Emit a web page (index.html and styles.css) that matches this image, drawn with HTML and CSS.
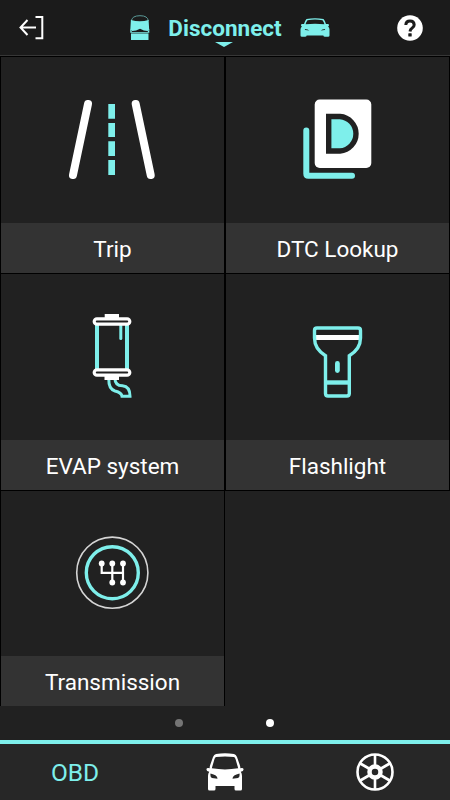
FILE: index.html
```html
<!DOCTYPE html>
<html lang="en">
<head>
    <meta charset="UTF-8">
    <title>OBD</title>
    <link rel="stylesheet" href="styles.css">
</head>
<body>
    <div class="header">
        <svg class="exit" width="26" height="26" viewBox="0 0 26 26">
            <path d="M18 11.5H3M9.5 4L2.5 11.5L9.5 19M17.5 1H24.3V22.3H17.5"/>
        </svg>
        <div class="status">
            <svg width="20" height="26" viewBox="0 0 20 26">
                <path class="thin" d="M1.3 6Q2 .7 10 .7T18.3 6"/>
                <path d="M.9 5Q10 7.5 18.6 5L19.2 15L17.5 16Q14 16 10 13.8Q6 16 2.3 16L.3 15Z"/>
                <path d="M.3 14L2 17H17.5L19.3 14V17.8H.3Z"/>
                <path d="M1 18.4H18.5V25H1Z"/>
            </svg>
            <h1>Disconnect</h1>
            <svg width="30" height="20" viewBox="0 0 30 20">
                <path fill-rule="evenodd" d="M6.5 1Q15-.6 23.5 1Q25.3 3 26 6L28.6 6L29 8L28 8.5Q29.5 9.7 29.5 11.5V17.5Q29.5 18.8 28 18.8H25Q23.5 18.8 23.3 17.6H6.7Q6.5 18.8 5 18.8H2Q.5 18.8 .5 17.5V11.5Q.5 9.7 2 8.5L1 8L1.4 6L4 6Q4.7 3 6.5 1ZM7.5 2.2Q6 4 5.6 6.3Q15 5.4 24.4 6.3Q24 4 22.5 2.2Q15 1 7.5 2.2ZM4.8 10.9L5.2 12L9.3 12.5Q8 11.2 4.8 10.9ZM25.2 10.9L24.8 12L20.7 12.5Q22 11.2 25.2 10.9Z"/>
            </svg>
            <i class="arrow"></i>
        </div>
        <svg class="help" width="26" height="26" viewBox="0 0 26 26">
            <circle cx="13" cy="13" r="12.8"/>
            <path d="M8.8 10Q9 6 13 6T17.2 9.8Q17.2 11.8 15.2 13T13 16.5"/>
            <rect x="11.3" y="18.3" width="3.4" height="3.2" rx=".5"/>
        </svg>
    </div>

    <div class="grid">
        <div class="cell">
            <div class="icon">
                <svg width="111" height="110" viewBox="0 0 111 110">
                    <path class="white road" d="M31 19L16 90M78.7 19L93.7 90"/>
                    <path class="fill" d="M51.3 19h6.7v14.7h-6.7zM51.3 38h6.7v14h-6.7zM51.3 56.3h6.7V71h-6.7zM51.3 75h6.7v15h-6.7z"/>
                </svg>
            </div>
            <p>Trip</p>
        </div>
        <div class="cell">
            <div class="icon">
                <svg width="111" height="110" viewBox="0 0 111 110">
                    <path class="cyan page" d="M24.3 45.5V88.8Q24.3 90.8 26.3 90.8H70"/>
                    <rect class="solid" x="32.7" y="14.5" width="56.6" height="68.5" rx="5"/>
                    <path class="letter" d="M46.7 31.5H58A17.3 17.3 0 0 1 58 66H46.7Z"/>
                </svg>
            </div>
            <p>DTC Lookup</p>
        </div>
        <div class="cell">
            <div class="icon">
                <svg width="111" height="110" viewBox="0 0 111 110">
                    <path class="cyan tube" d="M40 22V68M70 22V68"/>
                    <path class="cyan" d="M63.8 22V36.5"/>
                    <path class="cyan" d="M51.8 77Q51.5 87 58 89Q64.5 90.5 65 94.3H73Q73 84.5 65.5 83.8Q58 83.5 58 77"/>
                    <path class="solid" d="M47.7 12h14.3v4H47.7zM47.5 74h14.5v4H47.5z"/>
                    <rect class="cap" x="37.2" y="16.8" width="35.6" height="5.4" rx="2.7"/>
                    <rect class="cap" x="37.2" y="67.8" width="35.6" height="5.4" rx="2.7"/>
                </svg>
            </div>
            <p>EVAP system</p>
        </div>
        <div class="cell">
            <div class="icon">
                <svg width="111" height="110" viewBox="0 0 111 110">
                    <rect class="solid" x="34" y="33" width="43" height="5"/>
                    <path class="cyan torch" d="M35 26H76Q78.5 26 78.5 28.5V36Q78.5 47 67.3 53.7V91.5Q67.3 94 64.8 94H46Q43.5 94 43.5 91.5V53.7Q32.5 47 32.5 36V28.5Q32.5 26 35 26Z"/>
                    <path class="fill" d="M43.5 78.3h24v4.4h-24z"/>
                    <rect class="fill" x="53" y="59" width="4.8" height="12" rx="2.4"/>
                </svg>
            </div>
            <p>Flashlight</p>
        </div>
        <div class="cell">
            <div class="icon">
                <svg width="111" height="110" viewBox="0 0 111 110">
                    <circle class="ring" cx="55.3" cy="53.7" r="35.6"/>
                    <circle class="cyan torch" cx="55.3" cy="53.7" r="26"/>
                    <path class="gear" d="M44.7 44.5V53.9H66M55.3 44.5V63.5M66 44.5V63.5"/>
                    <g class="solid">
                        <circle cx="44.7" cy="44.5" r="2.9"/>
                        <circle cx="55.3" cy="44.5" r="2.9"/>
                        <circle cx="66" cy="44.5" r="2.9"/>
                        <circle cx="55.3" cy="63.5" r="2.9"/>
                        <circle cx="66" cy="63.5" r="2.9"/>
                    </g>
                </svg>
            </div>
            <p>Transmission</p>
        </div>
    </div>

    <div class="dots">
        <i></i><i class="on"></i>
    </div>

    <div class="tabs">
        <div class="tab"><span>OBD</span></div>
        <div class="tab">
            <svg width="38" height="38" viewBox="0 0 38 38">
                <path class="solid" fill-rule="evenodd" d="M10 .9Q19-.5 28 .9Q30 1.3 31 4L33.8 12Q34.5 14 34.3 15.2Q37.5 14.5 37.6 16.5Q37.5 18.5 34.8 18.8Q36 20.5 36 23V36Q36 37.5 34.5 37.5H30Q28.5 37.5 28.5 36V33H9.5V36Q9.5 37.5 8 37.5H3.5Q2 37.5 2 36V23Q2 20.5 3.2 18.8Q.5 18.5 .4 16.5Q.5 14.5 3.7 15.2Q3.5 14 4.2 12L7 4Q8 1.3 10 .9ZM10 4Q9 4.3 8.5 6L5.8 15.3Q19 17.5 32.2 15.3L29.5 6Q29 4.3 28 4Q19 2.8 10 4ZM4.5 20.5Q4 24.5 6 25L11.5 25.7Q11.5 22 4.5 20.5ZM33.5 20.5Q34 24.5 32 25L26.5 25.7Q26.5 22 33.5 20.5Z"/>
            </svg>
        </div>
        <div class="tab">
            <svg class="wheel" width="38" height="38" viewBox="0 0 38 38">
                <circle cx="19" cy="19" r="17.5"/>
                <circle class="hub" cx="19" cy="19" r="5.5"/>
                <path d="M19 2V13M19 25V36M4.3 10.5L13.8 16M24.2 22L33.7 27.5M33.7 10.5L24.2 16M13.8 22L4.3 27.5"/>
            </svg>
        </div>
    </div>
</body>
</html>
```
FILE: styles.css
```css
*{
    padding: 0;
    margin: 0;
    box-sizing: border-box;
}
body{
    display: flex;
    flex-direction: column;
    height: 800px;
    overflow: hidden;
    background: #212121;
    color: #fff;
    font-family: Roboto, "Noto Sans", sans-serif;
}
svg{
    display: block;
    fill: none;
}
.header{
    display: flex;
    align-items: center;
    justify-content: space-between;
    height: 56px;
    padding: 0 27px 0 18px;
    background: #1b1b1b;
    border-bottom: 1px solid #373737;
}
.exit{
    stroke: #fff;
    stroke-width: 2;
    margin-top: 2px;
}
.status{
    position: relative;
    display: flex;
    align-items: center;
    gap: 18px;
    margin-left: 19px;
}
.status svg{
    fill: #7eefeb;
}
.status .thin{
    fill: none;
    stroke: #5a9a98;
    stroke-width: 1;
}
.status h1{
    font-size: 22.5px;
    line-height: 30px;
    font-weight: 700;
    color: #7eefeb;
}
.arrow{
    position: absolute;
    left: 85px;
    top: 29px;
    border: 9px solid transparent;
    border-top: 5px solid #7eefeb;
    border-bottom: 0;
}
.help{
    fill: #fff;
}
.help path{
    fill: none;
    stroke: #1b1b1b;
    stroke-width: 3;
}
.help rect{
    fill: #1b1b1b;
}

.grid{
    display: grid;
    grid-template-columns: 225px 225px;
    grid-template-rows: 217px 217px 215px;
    border-top: 1px solid #000;
}
.cell{
    display: flex;
    flex-direction: column;
    border: 1px solid #000;
    border-top: 0;
}
.cell:last-child{
    border-bottom: 0;
}
.icon{
    flex: 1;
    display: flex;
    align-items: center;
    justify-content: center;
}
.cell p{
    height: 50px;
    line-height: 53px;
    background: #333;
    font-size: 22.5px;
    text-align: center;
}
.white,.cyan{
    stroke: #fff;
    stroke-width: 3;
}
.cyan{
    stroke: #7eefeb;
    stroke-linecap: round;
}
.solid{
    fill: #fff;
}
.fill{
    fill: #7eefeb;
}
.road{
    stroke-width: 8;
    stroke-linecap: round;
}
.page{
    stroke-width: 6;
}
.letter{
    fill: #7eefeb;
    stroke: #212121;
    stroke-width: 5.4;
}
.tube{
    stroke-width: 4;
}
.cap{
    fill: #212121;
    stroke: #fff;
    stroke-width: 3.2;
}
.torch{
    stroke-width: 3.4;
}
.ring{
    stroke: #d5d5d5;
    stroke-width: 1.6;
}
.gear{
    stroke: #fff;
    stroke-width: 2.2;
}

.dots{
    flex: 1;
    display: flex;
    justify-content: center;
    gap: 83px;
    padding: 13px 1px 0 0;
}
.dots i{
    width: 8px;
    height: 8px;
    border-radius: 50%;
    background: #757575;
}
.dots .on{
    background: #fff;
}
.tabs{
    display: flex;
    height: 60px;
    background: #272727;
    border-top: 4px solid #7eefeb;
}
.tab{
    flex: 1;
    display: flex;
    align-items: center;
    justify-content: center;
}
.tab span{
    font-size: 24.5px;
    color: #7eefeb;
}
.wheel{
    stroke: #fff;
    stroke-width: 2.6;
}
.wheel .hub{
    stroke-width: 4.5;
}
```
